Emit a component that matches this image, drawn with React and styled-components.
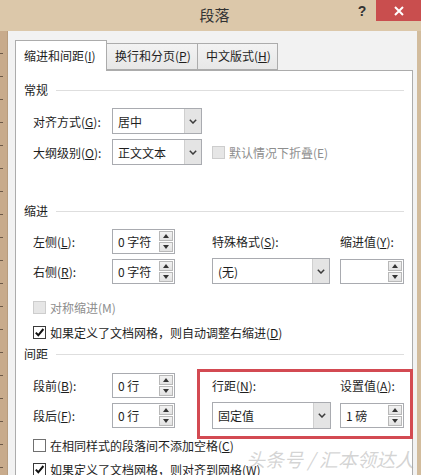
import React from 'react';
import styled, { createGlobalStyle } from 'styled-components';

const Global = createGlobalStyle`
  html, body { margin: 0; padding: 0; }
  body {
    width: 421px; height: 475px; overflow: hidden;
    background: #dac6a8;
    font-family: "Noto Sans CJK SC", "Noto Sans", sans-serif;
    color: #1e1e1e;
  }
`;

const Window = styled.div`
  width: 421px; height: 475px;
  display: flex; flex-direction: column;
  overflow: hidden;
  background: #dcc8aa;
`;

const TitleBar = styled.div`
  height: 31px; flex: none;
  display: grid;
  padding-left: 8px;
`;

const Title = styled.div`
  grid-area: 1 / 1;
  text-align: center;
  font-size: 15px;
  line-height: 30px;
  color: #333;
`;

const TitleControls = styled.div`
  grid-area: 1 / 1;
  justify-self: end;
  align-self: start;
  display: flex;
`;

const Help = styled.div`
  width: 28px; height: 21px;
  display: flex; align-items: center; justify-content: center;
  font-family: "Liberation Sans", sans-serif;
  font-weight: bold; font-size: 14px; color: #333;
`;

const Close = styled.div`
  width: 45px; height: 21px;
  background: #c94e4e;
  display: flex; align-items: center; justify-content: center;
`;

const Main = styled.div`
  flex: 1; display: flex; min-height: 0;
`;

const LeftStrip = styled.div`
  width: 8px; flex: none;
  background:
    repeating-linear-gradient(to bottom, transparent 0 22px, #6d5a48 22px 23px) left / 3px 100% no-repeat,
    #c8ab8c;
  border-right: 1px solid #b79c7e;
  box-sizing: border-box;
`;

const Dialog = styled.div`
  flex: 1;
  display: flex; flex-direction: column;
  background: #f2f2f2;
  padding: 9px 4px 0 7px;
  border-right: 4px solid #d2bc9d;
  min-height: 0;
`;

const Tabs = styled.div`
  height: 30px; flex: none;
  display: flex; align-items: flex-end;
`;

const Tab = styled.div`
  position: relative;
  z-index: ${p => (p.$active ? 2 : 1)};
  box-sizing: border-box;
  width: ${p => p.$w}px;
  height: ${p => (p.$active ? 31 : 27)}px;
  margin-left: ${p => (p.$first ? 0 : -1)}px;
  margin-bottom: ${p => (p.$active ? -1 : 0)}px;
  border: 1px solid #acacac;
  border-bottom: ${p => (p.$active ? 'none' : '1px solid #acacac')};
  background: ${p => (p.$active ? '#ffffff' : 'linear-gradient(#f3f3f3, #e7e7e7)')};
  padding-left: 8px;
  font-size: 12px;
  line-height: ${p => (p.$active ? 29 : 23)}px;
  white-space: nowrap;
`;

const Panel = styled.div`
  position: relative;
  flex: 1;
  background: #ffffff;
  border: 1px solid #acacac;
  padding: 11px 8px 0 8px;
  display: flex; flex-direction: column;
`;

const SectionHeader = styled.div`
  display: flex; align-items: center; gap: 8px;
  height: 16px; line-height: 16px;
  font-size: 12px;
  margin-top: ${p => p.$mt || 0}px;
  &::after {
    content: ""; flex: 1; height: 1px; background: #dedede;
  }
`;

const FormGrid = styled.div`
  margin-left: 9px;
  margin-top: ${p => p.$mt || 0}px;
  display: grid;
  grid-template-columns: 79px 100px 128px 64px;
  grid-auto-rows: 26px;
  row-gap: ${p => p.$gap}px;
  align-items: center;
`;

const Label = styled.div`
  font-size: 12px;
  white-space: nowrap;
  color: ${p => (p.$disabled ? '#8e8e8e' : '#1e1e1e')};
`;

const Key = styled.span`
  text-decoration: underline;
  text-underline-offset: 1px;
`;

const SelectBox = styled.div`
  box-sizing: border-box;
  width: ${p => p.$w}px;
  height: ${p => p.$h || 26}px;
  border: 1px solid #a9abb0;
  background: #fff;
  display: flex;
`;

const Value = styled.div`
  flex: 1;
  padding-left: 5px;
  font-size: 12px;
  display: flex; align-items: center;
  white-space: nowrap;
`;

const DropBtn = styled.div`
  width: 16px; flex: none;
  background: #e4e4e4;
  border-left: 1px solid #cfcfcf;
  display: flex; align-items: center; justify-content: center;
`;

const SpinBox = styled.div`
  box-sizing: border-box;
  width: ${p => p.$w}px;
  height: 25px;
  border: 1px solid #a9abb0;
  background: #fff;
  display: flex;
`;

const SpinBtns = styled.div`
  width: 14px; flex: none;
  margin: 1px;
  display: flex; flex-direction: column; gap: 1px;
`;

const SpinBtn = styled.div`
  flex: 1;
  box-sizing: border-box;
  background: linear-gradient(#f2f2f2, #e2e2e2);
  border: 1px solid #b8b8b8;
  display: flex; align-items: center; justify-content: center;
`;

const CheckRow = styled.div`
  margin-left: 9px;
  margin-top: ${p => p.$mt || 0}px;
  height: 18px;
  display: flex; align-items: center; gap: 4px;
  font-size: 12px;
  white-space: nowrap;
  color: ${p => (p.$disabled ? '#8e8e8e' : '#1e1e1e')};
`;

const InlineCheck = styled(CheckRow)`
  margin: 0;
`;

const CheckText = styled.span`
  white-space: nowrap;
`;

const Box = styled.div`
  box-sizing: border-box;
  width: 13px; height: 13px; flex: none;
  border: 1px solid ${p => (p.$disabled ? '#cdcdcd' : p.$checked ? '#3a3a3a' : '#707070')};
  background: ${p => (p.$disabled ? '#e6e6e6' : '#ffffff')};
  display: flex; align-items: center; justify-content: center;
`;

const Highlight = styled.div`
  position: absolute;
  left: 181px; top: 298px;
  width: 216px; height: 70px;
  box-sizing: border-box;
  border: 3px solid #d34a52;
  pointer-events: none;
`;

const Watermark = styled.div`
  position: absolute;
  left: 230px; top: 375px;
  font-size: 19px;
  line-height: 26px;
  color: rgba(170, 170, 170, 0.5);
  font-style: italic;
  white-space: nowrap;
  pointer-events: none;
`;

const Chevron = () => (
  <svg width="8" height="5" viewBox="0 0 8 5">
    <polyline points="0.8,0.8 4,4 7.2,0.8" fill="none" stroke="#3c3c3c" strokeWidth="1.5" />
  </svg>
);

const Tri = ({ up }) => (
  <svg width="6" height="4" viewBox="0 0 6 4">
    <polygon points={up ? '0,4 6,4 3,0' : '0,0 6,0 3,4'} fill="#333" />
  </svg>
);

const CheckMark = () => (
  <svg width="11" height="11" viewBox="0 0 11 11">
    <polyline points="1.8,5.6 4.3,8.3 9.4,2" fill="none" stroke="#111" strokeWidth="2" />
  </svg>
);

const Select = ({ w, h, value }) => (
  <SelectBox $w={w} $h={h}>
    <Value>{value}</Value>
    <DropBtn><Chevron /></DropBtn>
  </SelectBox>
);

const Spin = ({ w, value }) => (
  <SpinBox $w={w}>
    <Value>{value}</Value>
    <SpinBtns>
      <SpinBtn><Tri up /></SpinBtn>
      <SpinBtn><Tri /></SpinBtn>
    </SpinBtns>
  </SpinBox>
);

const L = ({ text, k, suffix = ':' }) => (
  <Label>
    {text}(<Key>{k}</Key>){suffix}
  </Label>
);

export default function App() {
  return (
    <>
      <Global />
      <Window>
        <TitleBar>
          <Title>段落</Title>
          <TitleControls>
            <Help>?</Help>
            <Close>
              <svg width="10" height="10" viewBox="0 0 10 10">
                <path d="M1 1 L9 9 M9 1 L1 9" stroke="#fff" strokeWidth="2" />
              </svg>
            </Close>
          </TitleControls>
        </TitleBar>
        <Main>
          <LeftStrip />
          <Dialog>
            <Tabs>
              <Tab $active $first $w={92}>缩进和间距(<Key>I</Key>)</Tab>
              <Tab $w={92}>换行和分页(<Key>P</Key>)</Tab>
              <Tab $w={81}>中文版式(<Key>H</Key>)</Tab>
            </Tabs>
            <Panel>
              <SectionHeader>常规</SectionHeader>
              <FormGrid $mt={10} $gap={5}>
                <L text="对齐方式" k="G" />
                <Select w={90} value="居中" />
                <span />
                <span />
                <L text="大纲级别" k="O" />
                <Select w={90} value="正文文本" />
                <InlineCheck $disabled style={{ gridColumn: '3 / 5' }}>
                  <Box $disabled />
                  <CheckText>默认情况下折叠(E)</CheckText>
                </InlineCheck>
              </FormGrid>

              <SectionHeader $mt={38}>缩进</SectionHeader>
              <FormGrid $mt={9} $gap={4}>
                <L text="左侧" k="L" />
                <Spin w={63} value="0 字符" />
                <L text="特殊格式" k="S" />
                <L text="缩进值" k="Y" />
                <L text="右侧" k="R" />
                <Spin w={63} value="0 字符" />
                <Select w={118} value="(无)" />
                <Spin w={64} value="" />
              </FormGrid>

              <CheckRow $disabled $mt={14}>
                <Box $disabled />
                <CheckText>对称缩进(M)</CheckText>
              </CheckRow>
              <CheckRow $mt={7}>
                <Box $checked><CheckMark /></Box>
                <CheckText>如果定义了文档网格，则自动调整右缩进(<Key>D</Key>)</CheckText>
              </CheckRow>

              <SectionHeader $mt={5}>间距</SectionHeader>
              <FormGrid $mt={10} $gap={4}>
                <L text="段前" k="B" />
                <Spin w={63} value="0 行" />
                <L text="行距" k="N" />
                <L text="设置值" k="A" />
                <L text="段后" k="F" />
                <Spin w={63} value="0 行" />
                <Select w={119} h={27} value="固定值" />
                <Spin w={64} value="1 磅" />
              </FormGrid>

              <CheckRow $mt={8}>
                <Box />
                <CheckText>在相同样式的段落间不添加空格(<Key>C</Key>)</CheckText>
              </CheckRow>
              <CheckRow $mt={6}>
                <Box $checked><CheckMark /></Box>
                <CheckText>如果定义了文档网格，则对齐到网格(<Key>W</Key>)</CheckText>
              </CheckRow>

              <Highlight />
              <Watermark>头条号 / 汇本领达人</Watermark>
            </Panel>
          </Dialog>
        </Main>
      </Window>
    </>
  );
}
